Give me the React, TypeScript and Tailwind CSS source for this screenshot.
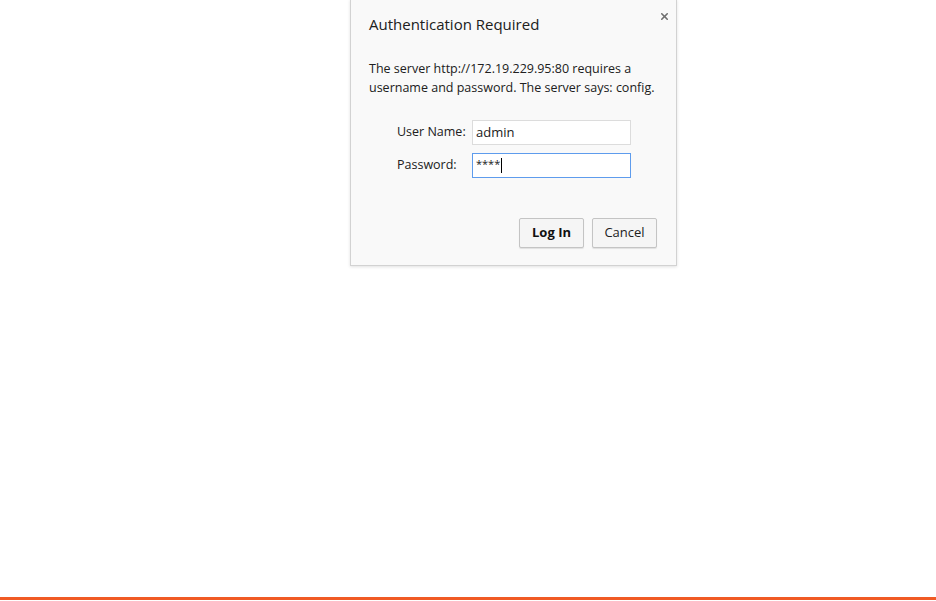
import React from "react";
import { X } from "lucide-react";

const font = { fontFamily: '"Open Sans", "Noto Sans", Arial, sans-serif' };

export default function App(): JSX.Element {
  return (
    <div className="w-[936px] h-[601px] bg-white flex flex-col overflow-hidden" style={font}>
      <div className="h-[597px] flex pl-[350px]">
        {/* Auth dialog */}
        <div className="mt-[-1px] w-[327px] h-[267px] bg-[#f9f9f9] border border-[#d2d2d2] shadow-[0_1px_3px_rgba(0,0,0,0.12)] relative px-[18px]">
          <button className="absolute right-[6px] top-[11px] text-[#6f6f6f]">
            <X className="w-[11px] h-[11px]" strokeWidth={3.5} />
          </button>
          <div className="pt-[13px] text-[15px] leading-[22px] text-[#202020]">Authentication Required</div>
          <p className="mt-[24px] text-[12.5px] leading-[19px] text-[#202020]">
            The server http://172.19.229.95:80 requires a
            <br />
            username and password. The server says: config.
          </p>

          <div className="mt-[23px] pl-[28px] flex flex-col gap-[8px] text-[12.5px] text-[#202020]">
            <div className="flex items-center">
              <label className="w-[75px]">User Name:</label>
              <div className="w-[159px] h-[25px] bg-white border border-[#dcdcdc] px-[3px] flex items-center text-[13px]">admin</div>
            </div>
            <div className="flex items-center">
              <label className="w-[75px]">Password:</label>
              <div className="w-[159px] h-[25px] bg-white border border-[#5e9ced] px-[3px] flex items-center">
                <span className="text-[11px] leading-none -mt-[5px]">****</span>
                <span className="w-px h-[15px] bg-black ml-px" />
              </div>
            </div>
          </div>

          <div className="mt-[40px] flex justify-end gap-[8px] pr-px">
            <button className="w-[65px] h-[30px] bg-[#f5f5f5] border border-[#c4c4c4] rounded-[2px] shadow-[0_1px_1px_rgba(0,0,0,0.1)] text-[13px] font-bold text-[#111]">Log In</button>
            <button className="w-[65px] h-[30px] bg-[#f5f5f5] border border-[#c4c4c4] rounded-[2px] shadow-[0_1px_1px_rgba(0,0,0,0.1)] text-[13px] text-[#222]">Cancel</button>
          </div>
        </div>
      </div>
      <div className="h-[3px] bg-[#f05a24]" />
    </div>
  );
}
